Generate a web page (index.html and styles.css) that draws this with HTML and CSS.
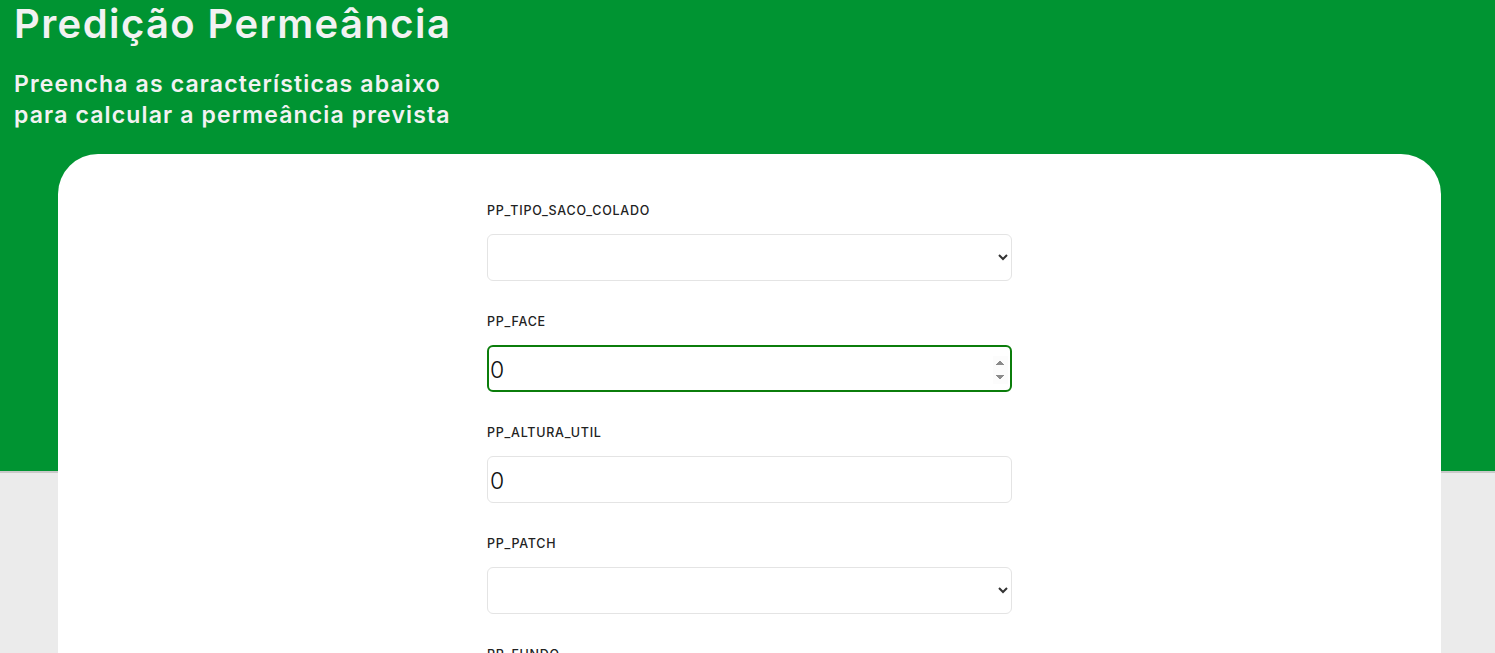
FILE: index.html
```html
<!DOCTYPE html>
<html lang="pt-BR">
<head>
<meta charset="utf-8">
<title>Predição Permeância</title>
<link rel="stylesheet" href="styles.css">
</head>
<body>
<header class="hero">
  <h1 class="hero-title">Predição Permeância</h1>
  <p class="hero-sub">Preencha as características abaixo<br>para calcular a permeância prevista</p>
</header>
<main class="card">
  <form class="form">
    <div class="field">
      <label class="field-label" for="tipo">PP_TIPO_SACO_COLADO</label>
      <select class="control" id="tipo"><option></option></select>
    </div>
    <div class="field">
      <label class="field-label" for="face">PP_FACE</label>
      <input class="control control-num is-active" id="face" type="number" value="0">
    </div>
    <div class="field">
      <label class="field-label" for="altura">PP_ALTURA_UTIL</label>
      <input class="control control-num" id="altura" type="number" value="0">
    </div>
    <div class="field">
      <label class="field-label" for="patch">PP_PATCH</label>
      <select class="control" id="patch"><option></option></select>
    </div>
    <div class="field">
      <label class="field-label" for="fundo">PP_FUNDO</label>
      <select class="control" id="fundo"><option></option></select>
    </div>
  </form>
</main>
</body>
</html>
```
FILE: styles.css
```css
* { box-sizing: border-box; }
html, body { margin: 0; padding: 0; }
body {
  background: #ebebeb;
  font-family: Inter, "Noto Sans", sans-serif;
  color: #222;
  overflow: hidden;
}
.hero {
  background: #009432;
  height: 473px;
  padding: 0 14px;
  color: #f2f2f2;
  border-bottom: 2px solid #c9c9c9;
}
.hero-title {
  margin: 0;
  font-size: 40px;
  line-height: 48px;
  font-weight: 600;
  letter-spacing: 1.4px;
}
.hero-sub {
  margin: 21px 0 0;
  font-size: 23px;
  line-height: 31px;
  font-weight: 600;
  letter-spacing: 1.15px;
}
.card {
  background: #fff;
  margin: -319px 54px 0 58px;
  border-radius: 40px 40px 0 0;
  padding: 47px 0 40px;
  min-height: 600px;
  position: relative;
}
.form {
  width: 525px;
  margin: 0 auto;
}
.field { margin-bottom: 31px; }
.field-label {
  display: block;
  font-size: 12.5px;
  line-height: 20px;
  font-weight: 500;
  letter-spacing: 0.75px;
  color: #222;
  margin-bottom: 13px;
}
.control {
  display: block;
  width: 100%;
  height: 47px;
  border: 1px solid #e4e4e4;
  border-radius: 6px;
  background: #fff;
  font-family: Inter, "Noto Sans", sans-serif;
  font-size: 23px;
  font-weight: 300;
  color: #111;
  padding: 2px 2px 0;
  outline: none;
}
select.control { padding-right: 10px; color: #333; }
.control-num::-webkit-inner-spin-button { opacity: 0; }
.is-active {
  border: 2px solid #0b7d0b;
  padding-left: 1px;
}
.is-active::-webkit-inner-spin-button { opacity: 1; }
```
